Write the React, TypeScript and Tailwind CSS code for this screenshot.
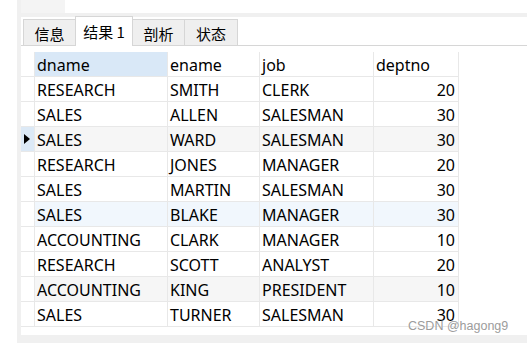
import React from "react";

const rows: [string, string, string, string][] = [
  ["RESEARCH", "SMITH", "CLERK", "20"],
  ["SALES", "ALLEN", "SALESMAN", "30"],
  ["SALES", "WARD", "SALESMAN", "30"],
  ["RESEARCH", "JONES", "MANAGER", "20"],
  ["SALES", "MARTIN", "SALESMAN", "30"],
  ["SALES", "BLAKE", "MANAGER", "30"],
  ["ACCOUNTING", "CLARK", "MANAGER", "10"],
  ["RESEARCH", "SCOTT", "ANALYST", "20"],
  ["ACCOUNTING", "KING", "PRESIDENT", "10"],
  ["SALES", "TURNER", "SALESMAN", "30"],
];

const rowBg = (i: number) =>
  i === 2 || i === 8 ? "bg-[#f6f6f6]" : i === 5 ? "bg-[#f1f7fd]" : "bg-white";

const cell = "h-[25px] border-b border-r border-[#e8e8e8] flex items-center pt-[2px]";

export default function App() {
  return (
    <div
      className="relative w-[527px] h-[343px] bg-white flex overflow-hidden text-black"
      style={{ fontFamily: '"Noto Sans", "Noto Sans CJK SC", sans-serif' }}
    >
      <div className="w-[17px] shrink-0 bg-white" />
      <div className="flex-1 flex flex-col bg-[#f0f0f0] pl-[4px] pb-[8px]">
        <div className="h-[13px] flex shrink-0">
          <div className="w-[44px] bg-[#f4f4f4]" />
          <div className="flex-1 bg-white" />
        </div>
        <div className="h-[4px] shrink-0" />
        <div className="flex-1 bg-white flex flex-col">
          <div className="h-[29px] shrink-0 flex items-end pl-[2px] border-b border-[#d6d6d6] text-[15px]">
            <div className="h-[27px] w-[53px] -mb-px bg-[#efefef] border border-[#d6d6d6] flex items-center justify-center leading-none pt-[1px]" style={{ fontFamily: '"Noto Sans CJK SC", sans-serif' }}>
              信息
            </div>
            <div className="h-[30px] w-[58px] -mb-px -ml-px bg-white border border-b-0 border-[#d6d6d6] flex items-center justify-center leading-none relative z-10" style={{ fontFamily: '"Noto Sans CJK SC", sans-serif' }}>
              结果 1
            </div>
            <div className="h-[27px] w-[53px] -mb-px -ml-px bg-[#efefef] border border-[#d6d6d6] flex items-center justify-center leading-none pt-[1px]" style={{ fontFamily: '"Noto Sans CJK SC", sans-serif' }}>
              剖析
            </div>
            <div className="h-[27px] w-[54px] -mb-px -ml-px bg-[#efefef] border border-[#d6d6d6] flex items-center justify-center leading-none pt-[1px]" style={{ fontFamily: '"Noto Sans CJK SC", sans-serif' }}>
              状态
            </div>
          </div>
          <div className="h-[6px] shrink-0" />
          <div className="grid grid-cols-[14px_133px_92px_114px_85px] w-fit text-[16px] leading-none">
            <div className={`${cell}`} />
            <div className={`${cell} pl-[2px] bg-[#d9e8f7]`}>dname</div>
            <div className={`${cell} pl-[2px]`}>ename</div>
            <div className={`${cell} pl-[2px]`}>job</div>
            <div className={`${cell} pl-[2px]`}>deptno</div>
            {rows.map((r, i) => (
              <React.Fragment key={i}>
                <div className={`${cell} ${i === 2 ? "bg-[#dce9f6]" : "bg-white"} justify-center`}>
                  {i === 2 && (
                    <svg width="6" height="10" viewBox="0 0 6 10" className="-ml-[2px] -mt-[2px]">
                      <path d="M0 0 L6 5 L0 10 Z" fill="#000" />
                    </svg>
                  )}
                </div>
                <div className={`${cell} ${rowBg(i)} pl-[2px]`}>{r[0]}</div>
                <div className={`${cell} ${rowBg(i)} pl-[2px]`}>{r[1]}</div>
                <div className={`${cell} ${rowBg(i)} pl-[2px]`}>{r[2]}</div>
                <div className={`${cell} ${rowBg(i)} justify-end pr-[3px]`}>{r[3]}</div>
              </React.Fragment>
            ))}
          </div>
        </div>
      </div>
      <div
        className="absolute left-[408px] top-[320px] text-[12.5px] leading-none text-[#9c9c9c]"
        style={{ fontFamily: '"Liberation Sans", Arial, sans-serif', textShadow: "0 0 1px #fff" }}
      >
        CSDN @hagong9
      </div>
    </div>
  );
}
